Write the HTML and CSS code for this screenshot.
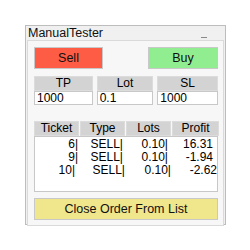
FILE: index.html
```html
<!DOCTYPE html>
<html lang="en">
<head>
<meta charset="UTF-8">
<title>ManualTester</title>
<link rel="stylesheet" href="styles.css">
</head>
<body>

<div class="panel">
  <div class="title-bar">
    <span class="title">ManualTester</span>
    <span class="minimize"></span>
  </div>
  <div class="client">
    <div class="trade-row">
      <button class="btn sell">Sell</button>
      <button class="btn buy">Buy</button>
    </div>

    <div class="params">
      <div class="param">
        <div class="head">TP</div>
        <input class="field" type="text" value="1000">
      </div>
      <div class="param">
        <div class="head">Lot</div>
        <input class="field" type="text" value="0.1">
      </div>
      <div class="param">
        <div class="head">SL</div>
        <input class="field" type="text" value="1000">
      </div>
    </div>

    <div class="orders">
      <div class="cols">
        <div class="head">Ticket</div>
        <div class="head">Type</div>
        <div class="head">Lots</div>
        <div class="head">Profit</div>
      </div>
      <div class="list">
        <div class="item"><span>6|</span><span>SELL|</span><span>0.10|</span><span>16.31</span></div>
        <div class="item"><span>9|</span><span>SELL|</span><span>0.10|</span><span>-1.94</span></div>
        <div class="item last"><span>10|</span><span>SELL|</span><span>0.10|</span><span>-2.62</span></div>
      </div>
    </div>

    <button class="btn close-order">Close Order From List</button>
  </div>
</div>

</body>
</html>
```

FILE: styles.css
```css
body {
  margin: 0;
  padding: 25px;
  background: #fff;
  font-family: "Liberation Sans", Arial, sans-serif;
  font-size: 12px;
  color: #000;
}
.panel {
  width: 199px;
  height: 198px;
  border: 1px solid #bdbdbd;
  background: #f0f0f0;
  display: flex;
  flex-direction: column;
}
.title-bar {
  height: 15px;
  display: flex;
  align-items: center;
  justify-content: space-between;
  padding: 0 18px 0 2px;
}
.title {
  font-size: 12.5px;
  color: #111;
}
.minimize {
  width: 6px;
  height: 1px;
  margin-top: 8px;
  background: #888;
}
.client {
  flex: 1;
  margin: 0 1px 1px 1px;
  border: 1px solid #dadada;
  background: #f7f7f7;
  padding: 6px 5px 5px 6px;
  display: flex;
  flex-direction: column;
}
.btn {
  font-family: inherit;
  font-size: 12.5px;
  height: 22px;
  border: 1px solid #c8c8c8;
  padding: 0;
  color: #111;
}
.trade-row {
  display: flex;
  justify-content: space-between;
}
.sell {
  width: 69px;
  background: #fe5c45;
}
.buy {
  width: 70px;
  background: #90ee90;
}
.params {
  display: flex;
  gap: 4px;
  margin-top: 7px;
}
.param {
  display: flex;
  flex-direction: column;
}
.param:nth-child(1) { width: 59px; }
.param:nth-child(2) { width: 57px; }
.param:nth-child(3) { width: 61px; }
.head {
  height: 13px;
  line-height: 13px;
  background: #d3d3d3;
  border: 1px solid #dcdcdc;
  text-align: center;
  font-size: 12px;
}
.field {
  box-sizing: border-box;
  height: 14px;
  width: 100%;
  margin: 0;
  padding: 0 2px;
  border: 1px solid #c8c8c8;
  background: #fff;
  font-family: inherit;
  font-size: 12px;
}
.orders {
  margin-top: 16px;
  width: 184px;
}
.cols {
  display: grid;
  grid-template-columns: 45px 45px 45px 47px;
  gap: 1px;
}
.list {
  height: 53px;
  border: 1px solid #c8c8c8;
  background: #fff;
  padding-top: 1px;
}
.item {
  display: grid;
  grid-template-columns: 43px 45px 45px 45px;
  height: 13px;
  line-height: 13px;
}
.item.last {
  grid-template-columns: 40px 50px 46px 46px;
}
.item span {
  text-align: right;
}
.close-order {
  margin-top: 6px;
  width: 184px;
  background: #f0e68c;
}
```
